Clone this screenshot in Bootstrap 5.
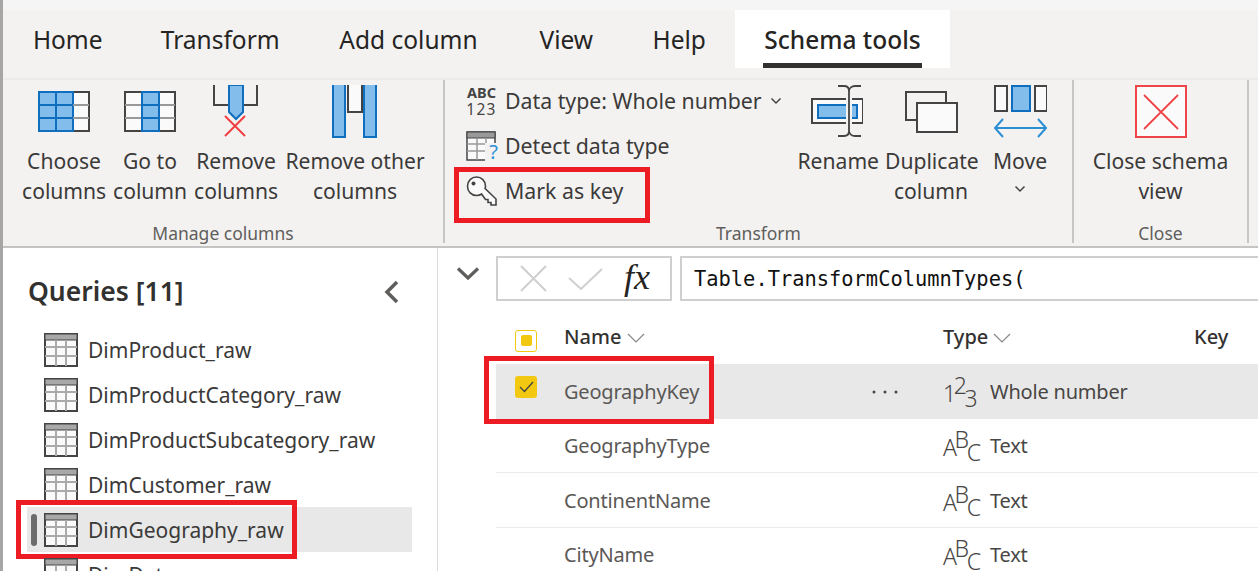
<!DOCTYPE html>
<html lang="en"><head><meta charset="utf-8"><title>Schema tools</title>
<link href="https://cdn.jsdelivr.net/npm/bootstrap@5.3.0/dist/css/bootstrap.min.css" rel="stylesheet">
<style>
html,body{height:571px;overflow:hidden;background:#fff}
body{font-family:"Noto Sans","Open Sans",sans-serif;color:#3b3a39}
.shell{height:571px;border-left:3px solid #a6a6a6;display:flex;flex-direction:column;overflow:hidden}
.topstrip{height:10px;background:#f5f5f5;flex:none}
.tabrow{height:68px;background:#f3f2f1;flex:none;padding-bottom:10px}
.rtab{font-size:24.5px;line-height:60px;height:58px;text-align:center;color:#252423;position:relative;white-space:nowrap;flex:none}
.t1{width:129.5px}.t2{width:175.5px}.t3{width:201px}.t4{width:114.5px}.t5{width:111.5px}.t6{width:215px}
.rtab.on{background:#fff;font-weight:500;font-size:24.5px}
.rtab.on::after{content:"";position:absolute;left:28px;right:28px;bottom:0;height:5px;background:#323130}
.ribbon{height:170px;flex:none;background:#f3f2f1;border-top:2px solid #ebebeb;border-bottom:2px solid #c4c4c4}
.rgroup{border-right:2px solid #c8c6c4;display:flex;flex-direction:column;flex:none;height:163px}
.g1{width:442px}.g2{width:629px}.g3{width:175px}
.g1 .gtools{padding-left:19px}.g2 .gtools{padding-left:21px}
.gtools{flex:1;display:flex;min-height:0}
.glabel{font-size:17.5px;line-height:24px;text-align:center;color:#605e5c;height:24px;margin-bottom:-2px;flex:none}
.rbtn{font-size:21.1px;line-height:30px;text-align:center;color:#3b3a39;flex:none;white-space:nowrap;padding-top:5px}
.rbtn svg{display:block;margin:0 auto 8px}
.smallstack{width:331.5px;margin-top:-2px;flex:none}
.srow{height:45px;display:flex;align-items:center;gap:8px;font-size:21.3px;white-space:nowrap;position:relative}
.abc{width:31px;flex:none;font-size:14.5px;line-height:17px;color:#444;font-weight:700;text-align:center}
.abc span{display:block;font-weight:400;font-size:15.5px;line-height:17px;letter-spacing:1.3px}
.detect{width:31px;height:32px;flex:none;position:relative}
.detect span{position:absolute;right:-1px;bottom:-2px;font-size:20px;line-height:24px;color:#2b8fd6}
.mainpane{flex:1;display:flex;min-height:0}
.sidebar{width:435px;flex:none;border-right:1px solid #dcdcdc;padding:0 25px;overflow:hidden}
.qhead{height:79px;display:flex;align-items:center;justify-content:space-between;padding-right:12px;font-size:26.5px;font-weight:600;color:#323130}
.qhead span{padding-top:9px}
.qhead svg{margin-top:9px}
.qrow{height:45px;display:flex;align-items:center;gap:10px;font-size:21px;padding-left:17px;position:relative;width:385px;margin-left:-1px;white-space:nowrap;color:#3b3a39}
.qname{padding-top:2px}
.qrow.sel{background:#e8e8e8}
.qbar{position:absolute;left:4px;top:7px;bottom:6px;width:6px;border-radius:3px;background:#6b6b6b}
.redbox{position:absolute;border:5px solid #ed1c24;pointer-events:none}
.rb1{left:-11px;top:-7px;width:281px;height:59px}
.rb2{left:-12px;top:-8px;width:230px;height:68px}
.rb3{left:-12px;top:-1px;width:196px;height:56px}
.rightpane{flex:1;min-width:0;overflow:hidden;padding-left:18px}
.fbar{height:45px;margin-top:8px;display:flex;align-items:stretch;gap:8px;padding-left:40px;position:relative}
.fchev{position:absolute;left:0;top:10px}
.fbtns{width:176px;border:2px solid #cfcfcf;display:flex;align-items:center;flex:none;padding-left:22px;gap:21px}
.fx{font-family:"Liberation Serif",serif;font-style:italic;font-size:36px;color:#252423;line-height:1;margin-top:-4px}
.fval{flex:1;border:2px solid #cfcfcf;border-right:0;font-family:"DejaVu Sans Mono",monospace;font-size:20.4px;line-height:43px;padding-left:12px;color:#111;white-space:nowrap}
.gridhead{height:63px;padding-top:8px;display:flex;align-items:center;font-size:20px;font-weight:500;color:#323130;margin-left:40px}
.gridrow{height:54.5px;padding-top:2px;display:flex;align-items:center;font-size:20px;letter-spacing:-.2px;color:#5a5856;margin-left:40px;border-bottom:1px solid #edebe9;position:relative}
.gridrow.sel{background:#e8e8e8;border-bottom:0}
.cellchk{width:68px;flex:none;display:flex;justify-content:center;padding-right:8px}
.cellname{flex:none;white-space:nowrap}
.w308{width:308px}.w379{width:379px}.w251{width:251px}
.celldots{width:71px;flex:none}
.celltype{flex:none;display:flex;align-items:center;white-space:nowrap;color:#484644}
.tglyph{width:47px;font-size:23px;font-weight:300;color:#484644;line-height:1;letter-spacing:-2.4px;flex:none}
.up{vertical-align:8px}.dn{vertical-align:-5px}
.hcheck{width:22px;height:22px;border:1px solid #f2c811;border-radius:3px;display:flex;align-items:center;justify-content:center;background:#fff;margin-top:8px}
.hcheck i{display:block;width:11px;height:11px;background:#f2c811;border-radius:2px}
.rcheck{width:22px;height:22px;background:#f2c811;border-radius:3px;display:flex;align-items:center;justify-content:center;margin-top:-10px}
</style></head><body>
<div class="shell">
<div class="topstrip"></div>
<div class="tabrow d-flex">
<div class="rtab t1">Home</div><div class="rtab t2">Transform</div><div class="rtab t3">Add column</div><div class="rtab t4">View</div><div class="rtab t5">Help</div><div class="rtab t6 on">Schema tools</div>
</div>
<div class="ribbon d-flex">
<div class="rgroup g1">
<div class="gtools">
<div class="rbtn" style="width:84px"><svg width="52" height="53" viewBox="0 0 52 53"><g transform="translate(0,6)"><rect x="1" y="1" width="50" height="39" fill="#fafafa" stroke="#444" stroke-width="2"/><rect x="1" y="1" width="34" height="39" fill="#83bdec" stroke="#106ebe" stroke-width="2"/><path d="M18 1v39" stroke="#106ebe" stroke-width="2"/><path d="M1 14h34M1 27h34" stroke="#106ebe" stroke-width="2"/><path d="M35 14h16M35 27h16" stroke="#999" stroke-width="2"/></g></svg>Choose<br>columns</div>
<div class="rbtn" style="width:74px;margin-left:7px"><svg width="52" height="53" viewBox="0 0 52 53"><g transform="translate(0,6)"><rect x="1" y="1" width="50" height="39" fill="#fafafa" stroke="#444" stroke-width="2"/><path d="M1 14h50M1 27h50" stroke="#999" stroke-width="2"/><rect x="18" y="1" width="17" height="39" fill="#83bdec" stroke="#106ebe" stroke-width="2"/><path d="M18 14h17M18 27h17" stroke="#106ebe" stroke-width="2"/></g></svg>Go to<br>column</div>
<div class="rbtn" style="width:84px;margin-left:7px"><svg width="52" height="53" viewBox="0 0 52 53"><path d="M4 0v20h14M33 20h14V0" fill="none" stroke="#444" stroke-width="2"/><path d="M19 0v27l7 7 7-7V0z" fill="#83bdec" stroke="#106ebe" stroke-width="2"/><path d="M15 31 35 51M35 31 15 51" stroke="#ef3e42" stroke-width="2"/></svg>Remove<br>columns</div>
<div class="rbtn" style="width:140px;margin-left:7px"><svg width="46" height="53" viewBox="0 0 46 53"><rect x="1" y="-2" width="12" height="54" fill="#83bdec" stroke="#106ebe" stroke-width="2"/><rect x="32" y="-2" width="12" height="54" fill="#83bdec" stroke="#106ebe" stroke-width="2"/><path d="M16 0v27h14V0" fill="#fafafa" stroke="#444" stroke-width="2"/></svg>Remove other<br>columns</div>
</div>
<div class="glabel">Manage columns</div>
</div>
<div class="rgroup g2">
<div class="gtools">
<div class="smallstack">
<div class="srow"><div class="abc">ABC<span>123</span></div><span>Data type: Whole number</span><svg width="12" height="8" viewBox="0 0 12 8"><path d="M1.500 1.500 6 6l4.500-4.500" fill="none" stroke="#444" stroke-width="1.500"/></svg></div>
<div class="srow"><div class="detect"><svg width="31" height="32" viewBox="0 0 31 32" class="d-block"><rect x="1" y="2" width="28" height="28" fill="#fafafa" stroke="#444" stroke-width="1.500"/><rect x="1" y="2" width="28" height="6" fill="#999" stroke="#444" stroke-width="1"/><path d="M1 14h28M1 21h20M11 8v22M20 8v22" stroke="#999" stroke-width="1.500"/><rect x="19" y="13" width="12" height="19" fill="#f3f2f1"/></svg><span>?</span></div><span>Detect data type</span></div>
<div class="srow"><svg width="31" height="32" viewBox="0 0 31 32"><path d="M10.500 2c5 0 9 4 9 9 0 1-.2 1.800-.4 2.600L30 24v6h-5v-2.500h-3v-3h-2.500L17 21l-1.300-2c-1.500 1-3.300 1.500-5.200 1.500-5 0-9-4-9-9.300C1.500 6 5.500 2 10.500 2z" fill="#fafafa" stroke="#444" stroke-width="1.600"/><circle cx="7.500" cy="8.500" r="2" fill="#444"/></svg><span>Mark as key</span><span class="redbox rb3"></span></div>
</div>
<div class="rbtn" style="width:79px"><svg width="52" height="53" viewBox="0 0 52 53"><rect x="1" y="14" width="51" height="24" fill="#fafafa" stroke="#444" stroke-width="2"/><rect x="7" y="20" width="39" height="13" fill="#83bdec" stroke="#106ebe" stroke-width="2"/><rect x="35" y="2" width="6" height="49" fill="#f3f2f1"/><path d="M27 1h6c3 0 5 2 5 5v40c0 3-2 5-5 5h-6M50 1h-6c-3 0-6 2-6 5M50 51h-6c-3 0-6-2-6-5" fill="none" stroke="#444" stroke-width="1.800"/></svg>Rename</div>
<div class="rbtn" style="width:92px;margin-left:8.500px"><svg width="54" height="53" viewBox="0 0 54 53"><rect x="2" y="7" width="40" height="28" fill="#f3f2f1" stroke="#444" stroke-width="2"/><rect x="13" y="18" width="40" height="29" fill="#fafafa" stroke="#444" stroke-width="2"/></svg>Duplicate<br>column</div>
<div class="rbtn" style="width:60px;margin-left:13px"><svg width="54" height="53" viewBox="0 0 54 53"><g transform="translate(1,0)"><rect x="1" y="1" width="12" height="25" fill="#fafafa" stroke="#444" stroke-width="2"/><rect x="18" y="1" width="18" height="25" fill="#83bdec" stroke="#106ebe" stroke-width="2"/><rect x="41" y="1" width="12" height="25" fill="#fafafa" stroke="#444" stroke-width="2"/><path d="M1 43h51M9 34l-8 9 8 9M44 34l8 9-8 9" fill="none" stroke="#2b8fd6" stroke-width="2"/></g></svg>Move<br><svg class="d-inline" width="12" height="8" viewBox="0 0 12 8"><path d="M1.500 1.500 6 6l4.500-4.500" fill="none" stroke="#444" stroke-width="1.500"/></svg></div>
</div>
<div class="glabel">Transform</div>
</div>
<div class="rgroup g3">
<div class="gtools justify-content-center">
<div class="rbtn"><svg width="52" height="53" viewBox="0 0 52 53"><rect x="1" y="1" width="50" height="51" fill="#fafafa" stroke="#ef4548" stroke-width="2"/><path d="M9 10 43 44M43 10 9 44" stroke="#ef4548" stroke-width="1.800"/></svg>Close schema<br>view</div>
</div>
<div class="glabel">Close</div>
</div>
</div>
<div class="mainpane">
<div class="sidebar">
<div class="qhead"><span>Queries [11]</span><svg width="16" height="24" viewBox="0 0 16 24"><path d="M13 2 3 12l10 10" fill="none" stroke="#605e5c" stroke-width="3.500"/></svg></div>
<div class="qrow"><svg width="34" height="34" viewBox="0 0 34 34"><use href="#tb"/></svg><span class="qname">DimProduct_raw</span></div>
<div class="qrow"><svg width="34" height="34" viewBox="0 0 34 34"><use href="#tb"/></svg><span class="qname">DimProductCategory_raw</span></div>
<div class="qrow"><svg width="34" height="34" viewBox="0 0 34 34"><use href="#tb"/></svg><span class="qname">DimProductSubcategory_raw</span></div>
<div class="qrow"><svg width="34" height="34" viewBox="0 0 34 34"><use href="#tb"/></svg><span class="qname">DimCustomer_raw</span></div>
<div class="qrow sel"><span class="qbar"></span><svg width="34" height="34" viewBox="0 0 34 34"><use href="#tb"/></svg><span class="qname">DimGeography_raw</span><span class="redbox rb1"></span></div>
<div class="qrow"><svg width="34" height="34" viewBox="0 0 34 34"><use href="#tb"/></svg><span class="qname">DimDate</span></div>
</div>
<div class="rightpane">
<div class="fbar">
<svg class="fchev" width="24" height="16" viewBox="0 0 24 16"><path d="M2 2.500 12 12 22 2.500" fill="none" stroke="#605e5c" stroke-width="3.200"/></svg>
<div class="fbtns"><svg width="27" height="27" viewBox="0 0 27 27"><path d="M1 1 26 26M26 1 1 26" stroke="#cfcfcf" stroke-width="2"/></svg><svg width="35" height="24" viewBox="0 0 35 24"><path d="M1 11 13 22 34 2" fill="none" stroke="#cfcfcf" stroke-width="2"/></svg><span class="fx">fx</span></div>
<div class="fval">Table.TransformColumnTypes(</div>
</div>
<div class="gridhead"><div class="cellchk"><span class="hcheck"><i></i></span></div><div class="cellname w379">Name <svg width="18" height="10" viewBox="0 0 18 10"><path d="M1 1l8 8 8-8" fill="none" stroke="#8a8886" stroke-width="1.200"/></svg></div><div class="w251">Type <svg width="18" height="10" viewBox="0 0 18 10"><path d="M1 1l8 8 8-8" fill="none" stroke="#8a8886" stroke-width="1.200"/></svg></div><div>Key</div></div>
<div class="gridrow sel"><span class="redbox rb2"></span><div class="cellchk"><span class="rcheck"><svg width="15" height="12" viewBox="0 0 15 12"><path d="M1 6l4.500 4.500L14 1" fill="none" stroke="#444" stroke-width="1.300"/></svg></span></div><div class="cellname w308">GeographyKey</div><div class="celldots"><svg width="26" height="4" viewBox="0 0 26 4" class="d-block"><circle cx="2" cy="2" r="1.500" fill="#484644"/><circle cx="13" cy="2" r="1.500" fill="#484644"/><circle cx="24" cy="2" r="1.500" fill="#484644"/></svg></div><div class="celltype"><span class="tglyph">1<span class="up">2</span><span class="dn">3</span></span>Whole number</div></div>
<div class="gridrow"><div class="cellchk"></div><div class="cellname w379">GeographyType</div><div class="celltype"><span class="tglyph">A<span class="up">B</span><span class="dn">C</span></span>Text</div></div>
<div class="gridrow"><div class="cellchk"></div><div class="cellname w379">ContinentName</div><div class="celltype"><span class="tglyph">A<span class="up">B</span><span class="dn">C</span></span>Text</div></div>
<div class="gridrow"><div class="cellchk"></div><div class="cellname w379">CityName</div><div class="celltype"><span class="tglyph">A<span class="up">B</span><span class="dn">C</span></span>Text</div></div>
</div>
</div>
</div>
<svg width="0" height="0" class="position-absolute"><defs><g id="tb"><rect x="1" y="1" width="32" height="32" fill="#fafafa" stroke="#444" stroke-width="2"/><rect x="1" y="1" width="32" height="6" fill="#a8a8a8" stroke="#444" stroke-width="1"/><path d="M1 14h32M1 23h32M12 7v26M22 7v26" stroke="#aaa" stroke-width="2"/></g></defs></svg>
<script src="https://cdn.jsdelivr.net/npm/bootstrap@5.3.0/dist/js/bootstrap.bundle.min.js"></script>
</body></html>
